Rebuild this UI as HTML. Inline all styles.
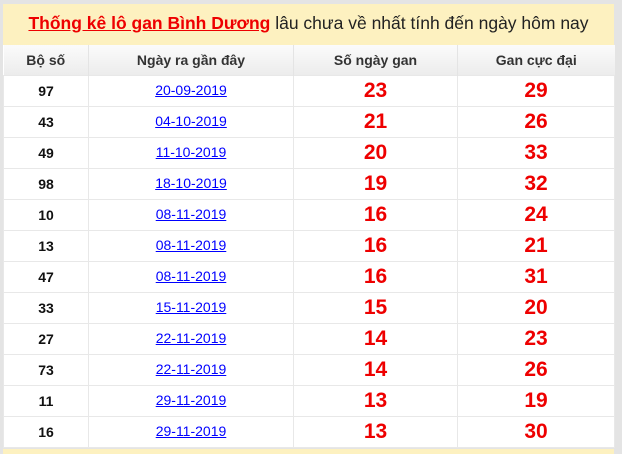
<!DOCTYPE html>
<html><head><meta charset="utf-8"><style>
body{margin:0;width:622px;height:454px;background:#e4e4e4;font-family:"Liberation Sans",Arial,sans-serif;overflow:hidden;position:relative}
.card{position:absolute;left:3px;top:4px;width:611px;background:#fff}
.title{height:41px;background:#fdf1c0;text-align:center;font-size:17.5px;line-height:38px;color:#222}
.title a{color:#e00;font-weight:bold;text-decoration:underline}
table{border-collapse:collapse;width:611px;table-layout:fixed}
th{height:30px;padding:0;background:linear-gradient(#fbfbfb,#ececec);font-size:14px;color:#333;font-weight:bold;border-left:1px solid #e4e4e4}
td{height:30px;text-align:center;border:1px solid #e8e8e8;padding:0}
td.b{font-weight:bold;font-size:14px;color:#111}
td.d a{color:#00f;text-decoration:underline;font-size:14px}
td.r{color:#e00;font-weight:bold;font-size:21px}
.foot{position:absolute;left:3px;top:449px;width:611px;height:5px;background:#fdf1c0}
</style></head><body>
<div class="card">
<div class="title"><a>Thống kê lô gan Bình Dương</a> lâu chưa về nhất tính đến ngày hôm nay</div>
<table>
<colgroup><col style="width:85px"><col style="width:205px"><col style="width:164px"><col style="width:157px"></colgroup>
<tr><th style="border-left:0">Bộ số</th><th>Ngày ra gần đây</th><th>Số ngày gan</th><th>Gan cực đại</th></tr>
<tr><td class="b">97</td><td class="d"><a>20-09-2019</a></td><td class="r">23</td><td class="r">29</td></tr>
<tr><td class="b">43</td><td class="d"><a>04-10-2019</a></td><td class="r">21</td><td class="r">26</td></tr>
<tr><td class="b">49</td><td class="d"><a>11-10-2019</a></td><td class="r">20</td><td class="r">33</td></tr>
<tr><td class="b">98</td><td class="d"><a>18-10-2019</a></td><td class="r">19</td><td class="r">32</td></tr>
<tr><td class="b">10</td><td class="d"><a>08-11-2019</a></td><td class="r">16</td><td class="r">24</td></tr>
<tr><td class="b">13</td><td class="d"><a>08-11-2019</a></td><td class="r">16</td><td class="r">21</td></tr>
<tr><td class="b">47</td><td class="d"><a>08-11-2019</a></td><td class="r">16</td><td class="r">31</td></tr>
<tr><td class="b">33</td><td class="d"><a>15-11-2019</a></td><td class="r">15</td><td class="r">20</td></tr>
<tr><td class="b">27</td><td class="d"><a>22-11-2019</a></td><td class="r">14</td><td class="r">23</td></tr>
<tr><td class="b">73</td><td class="d"><a>22-11-2019</a></td><td class="r">14</td><td class="r">26</td></tr>
<tr><td class="b">11</td><td class="d"><a>29-11-2019</a></td><td class="r">13</td><td class="r">19</td></tr>
<tr><td class="b">16</td><td class="d"><a>29-11-2019</a></td><td class="r">13</td><td class="r">30</td></tr>
</table>
</div>
<div class="foot"></div>
</body></html>
